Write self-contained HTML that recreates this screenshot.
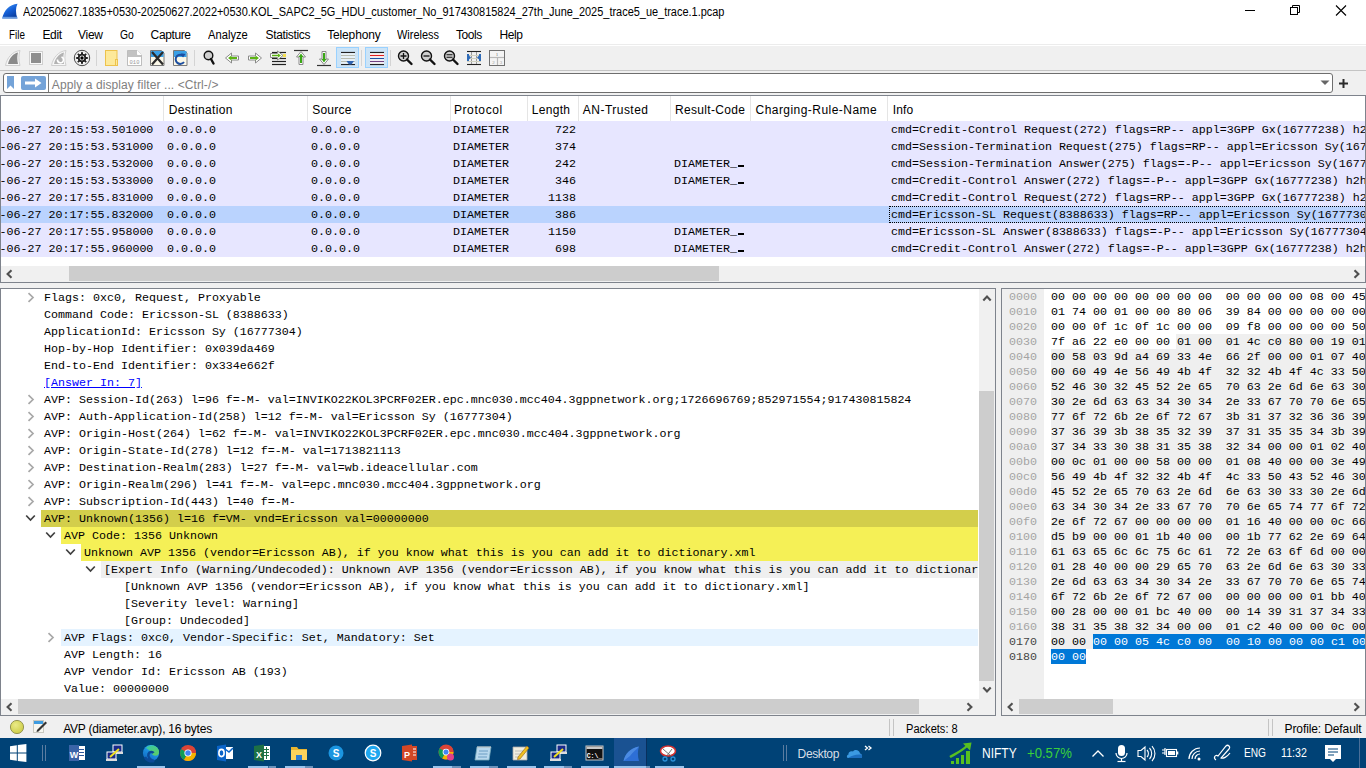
<!DOCTYPE html><html><head><meta charset="utf-8"><style>
*{margin:0;padding:0;box-sizing:border-box}
html,body{width:1366px;height:768px;overflow:hidden;background:#fff;position:relative}
body{font-family:"Liberation Sans",sans-serif;font-size:12px;color:#000}
.a{position:absolute}
.m{font-family:"Liberation Mono",monospace;font-size:11.67px;white-space:pre;line-height:17px}
.t{white-space:pre}
</style></head><body>
<svg class="a" style="left:0;top:0" width="24" height="22" viewBox="0 0 24 22"><defs><linearGradient id="sg" x1="0" y1="0" x2="0.6" y2="1"><stop offset="0" stop-color="#4fa3f7"/><stop offset="0.55" stop-color="#1560d8"/><stop offset="1" stop-color="#0a3ea0"/></linearGradient></defs><path d="M2.2 18.5 C4 10 9.5 4.5 17.5 3.8 C15.5 8 15.5 13 17.4 18.5 Z" fill="url(#sg)"/><rect x="2.2" y="16.8" width="15.2" height="1.8" fill="#7fb0ee" opacity="0.8"/></svg>
<div class="a t" style="left:23.40px;top:5px;font-size:12px;line-height:14px;transform:scaleX(0.9126);transform-origin:0 0;color:#000;">A20250627.1835+0530-20250627.2022+0530.KOL_SAPC2_5G_HDU_customer_No_917430815824_27th_June_2025_trace5_ue_trace.1.pcap</div>
<div class="a" style="left:1245px;top:10px;width:10px;height:1px;background:#000"></div>
<svg class="a" style="left:1289px;top:4px" width="12" height="12" viewBox="0 0 12 12"><rect x="1.5" y="3.5" width="7" height="7" fill="none" stroke="#000"/><path d="M3.5 3.5V1.5H10.5V8.5H8.5" fill="none" stroke="#000"/></svg>
<svg class="a" style="left:1335px;top:4px" width="12" height="12" viewBox="0 0 12 12"><path d="M1 1.5L11 11.5M11 1.5L1 11.5" stroke="#000" stroke-width="1.1"/></svg>
<div class="a t" style="left:8.90px;top:28px;font-size:12px;line-height:14px;transform:scaleX(0.8200);transform-origin:0 0;color:#000;">File</div>
<div class="a t" style="left:42.50px;top:28px;font-size:12px;line-height:14px;letter-spacing:-0.400px;color:#000;">Edit</div>
<div class="a t" style="left:78.00px;top:28px;font-size:12px;line-height:14px;letter-spacing:-0.267px;color:#000;">View</div>
<div class="a t" style="left:119.60px;top:28px;font-size:12px;line-height:14px;transform:scaleX(0.8625);transform-origin:0 0;color:#000;">Go</div>
<div class="a t" style="left:150.60px;top:28px;font-size:12px;line-height:14px;letter-spacing:-0.383px;color:#000;">Capture</div>
<div class="a t" style="left:207.90px;top:28px;font-size:12px;line-height:14px;transform:scaleX(0.9326);transform-origin:0 0;color:#000;">Analyze</div>
<div class="a t" style="left:265.50px;top:28px;font-size:12px;line-height:14px;letter-spacing:-0.344px;color:#000;">Statistics</div>
<div class="a t" style="left:327.20px;top:28px;font-size:12px;line-height:14px;letter-spacing:-0.150px;color:#000;">Telephony</div>
<div class="a t" style="left:397.40px;top:28px;font-size:12px;line-height:14px;transform:scaleX(0.9130);transform-origin:0 0;color:#000;">Wireless</div>
<div class="a t" style="left:456.00px;top:28px;font-size:12px;line-height:14px;letter-spacing:-0.425px;color:#000;">Tools</div>
<div class="a t" style="left:499.50px;top:28px;font-size:12px;line-height:14px;letter-spacing:-0.433px;color:#000;">Help</div>
<div class="a" style="left:0;top:44px;width:1366px;height:1px;background:#ececec"></div>
<div class="a" style="left:0;top:46px;width:1366px;height:49px;background:#f0f0f0"></div>
<div class="a" style="left:0;top:70px;width:1366px;height:1px;background:#c4c4c4"></div>
<svg class="a" style="left:0;top:0" width="520" height="72" viewBox="0 0 520 72"><path d="M5.5 65.5C7 58 12 51.5 20 50.5C18.5 55 18.5 60 20 65.5Z" fill="#f7f7f7" stroke="#cfcfcf"/><path d="M8 64C9.5 58 13 53.5 18 52.5C17 56 17 60 18 64Z" fill="#8a8a8a"/><rect x="29.5" y="51.5" width="13" height="13" fill="#f9f9f9" stroke="#cfcfcf"/><rect x="31" y="53" width="10" height="10" fill="#8e8e8e"/><path d="M51.5 65.5C53 58 58 51.5 66 50.5C64.5 55 64.5 60 66 65.5Z" fill="#f7f7f7" stroke="#cfcfcf"/><path d="M54 64C55.5 58 59 53.5 64 52.5C63 56 63 60 64 64Z" fill="#b2b2b2"/><path d="M57.5 59.5A3 3 0 1 0 61.5 57" fill="none" stroke="#fff" stroke-width="1.6"/><circle cx="82" cy="58" r="7.7" fill="#fff" stroke="#333" stroke-width="0.9"/><circle cx="82" cy="58" r="6.4" fill="none" stroke="#d8d8d8" stroke-width="0.8"/><rect x="81" y="52.2" width="2" height="2.4" fill="#222" transform="rotate(0 82 58)"/><rect x="81" y="52.2" width="2" height="2.4" fill="#222" transform="rotate(45 82 58)"/><rect x="81" y="52.2" width="2" height="2.4" fill="#222" transform="rotate(90 82 58)"/><rect x="81" y="52.2" width="2" height="2.4" fill="#222" transform="rotate(135 82 58)"/><rect x="81" y="52.2" width="2" height="2.4" fill="#222" transform="rotate(180 82 58)"/><rect x="81" y="52.2" width="2" height="2.4" fill="#222" transform="rotate(225 82 58)"/><rect x="81" y="52.2" width="2" height="2.4" fill="#222" transform="rotate(270 82 58)"/><rect x="81" y="52.2" width="2" height="2.4" fill="#222" transform="rotate(315 82 58)"/><circle cx="82" cy="58" r="4.3" fill="#222"/><circle cx="82" cy="58" r="2.4" fill="#fff"/><circle cx="82" cy="58" r="1.7" fill="#000"/><line x1="96.5" y1="50" x2="96.5" y2="66" stroke="#d4d4d4"/><line x1="194.5" y1="50" x2="194.5" y2="66" stroke="#d4d4d4"/><line x1="361.5" y1="50" x2="361.5" y2="66" stroke="#d4d4d4"/><line x1="390.5" y1="50" x2="390.5" y2="66" stroke="#d4d4d4"/><rect x="105.5" y="50.5" width="11.5" height="15" fill="#fde99a" stroke="#edc24c"/><rect x="115.5" y="59.5" width="2" height="6" fill="#fde99a" stroke="#edc24c"/><path d="M127.5 50.5H137.5L141.5 54.5V65.5H127.5Z" fill="#c2c2c2" stroke="#bdbdbd"/><path d="M137.5 50.5V54.5H141.5" fill="#fff" stroke="#fff"/><rect x="128" y="57" width="13" height="8" fill="#fff"/><text x="134.5" y="63.8" font-family="Liberation Mono" font-size="5.5" fill="#9a9a9a" text-anchor="middle">010</text><path d="M150.5 50.5H161.5L164 53V65.5H150.5Z" fill="#fbf8e8" stroke="#7a7a7a"/><rect x="151" y="51" width="12.5" height="6" fill="#3aa0e6"/><path d="M152 52L163 64.5M163 52L152 64.5" stroke="#2a2a2a" stroke-width="2.2"/><path d="M173.5 50.5H184.5L187 53V65.5H173.5Z" fill="#fbf8e8" stroke="#7a7a7a"/><rect x="174" y="51" width="12.5" height="6" fill="#3aa0e6"/><path d="M183.5 56A4.6 4.6 0 1 0 184 62" fill="none" stroke="#1d4ea0" stroke-width="2"/><path d="M181 53.2L185.5 54L183 57.5Z" fill="#1d4ea0"/><circle cx="208.5" cy="55.5" r="4.3" fill="#cfcfcf" stroke="#111" stroke-width="1.4"/><line x1="211" y1="59" x2="213.5" y2="63.5" stroke="#111" stroke-width="2.4" stroke-linecap="round"/><path d="M225.5 58L231.5 53V56H238.5V60H231.5V63Z" fill="#fff" stroke="#8a8a8a"/><path d="M228 58L231.5 55.5V57H237V59H231.5V60.5Z" fill="#5cb315"/><path d="M261.5 58L255.5 53V56H248.5V60H255.5V63Z" fill="#fff" stroke="#8a8a8a"/><path d="M259 58L255.5 55.5V57H250V59H255.5V60.5Z" fill="#5cb315"/><g stroke="#222" stroke-width="1.2"><line x1="272" y1="52.5" x2="286" y2="52.5"/><line x1="272" y1="58.5" x2="286" y2="58.5"/><line x1="272" y1="61.5" x2="286" y2="61.5"/><line x1="272" y1="64.5" x2="286" y2="64.5"/></g><rect x="283" y="54" width="3" height="3" fill="#f5e050"/><path d="M270.5 53.5H277.5V51L283 55.5L277.5 60V57.5H270.5Z" fill="#fff" stroke="#8a8a8a"/><path d="M272 54.8H278V53.5L281 55.5L278 57.5V56.3H272Z" fill="#5cb315"/><line x1="294" y1="50.5" x2="308" y2="50.5" stroke="#333" stroke-width="1.2"/><path d="M301 51.5L305.5 57H303V64.5H299V57H296.5Z" fill="#fff" stroke="#8a8a8a"/><path d="M301 53.5L303.5 57H302V63H300V57H298.5Z" fill="#3aa815"/><line x1="317" y1="65.5" x2="331" y2="65.5" stroke="#333" stroke-width="1.2"/><path d="M324 64.5L328.5 59H326V51.5H322V59H319.5Z" fill="#fff" stroke="#8a8a8a"/><path d="M324 62.5L326.5 59H325V53H323V59H321.5Z" fill="#3aa815"/><rect x="336.5" y="47.5" width="22" height="20" fill="#cce4f7" stroke="#99d1ff"/><g stroke-width="1.2"><line x1="341" y1="52.5" x2="355" y2="52.5" stroke="#222"/><line x1="341" y1="55.5" x2="355" y2="55.5" stroke="#b8bcb0"/><line x1="341" y1="58.5" x2="355" y2="58.5" stroke="#b8bcb0"/><line x1="341" y1="61.5" x2="355" y2="61.5" stroke="#b8bcb0"/><line x1="341" y1="64.5" x2="355" y2="64.5" stroke="#222"/></g><rect x="341" y="53" width="14" height="11" fill="#fff" opacity="0.55"/><line x1="341" y1="55.5" x2="355" y2="55.5" stroke="#b8bcb0"/><line x1="341" y1="58.5" x2="355" y2="58.5" stroke="#b8bcb0"/><line x1="341" y1="61.5" x2="355" y2="61.5" stroke="#b8bcb0"/><path d="M346.5 61H354L351.5 64.5H349Z" fill="#2f63b0"/><rect x="365.5" y="47.5" width="22" height="20" fill="#cce4f7" stroke="#99d1ff"/><rect x="370" y="52" width="14" height="13" fill="#fff"/><g stroke-width="1.2"><line x1="370" y1="52.5" x2="384" y2="52.5" stroke="#222"/><line x1="370" y1="55.5" x2="384" y2="55.5" stroke="#e02020"/><line x1="370" y1="58.5" x2="384" y2="58.5" stroke="#2050a0"/><line x1="370" y1="61.5" x2="384" y2="61.5" stroke="#704080"/><line x1="370" y1="64.5" x2="384" y2="64.5" stroke="#222"/></g><circle cx="403.5" cy="56" r="5" fill="#cfcfcf" stroke="#111" stroke-width="1.4"/><line x1="407.0" y1="59.5" x2="411.5" y2="64" stroke="#111" stroke-width="2.4" stroke-linecap="round"/><path d="M400.5 56H406.5M403.5 53V59" stroke="#111" stroke-width="1.3"/><circle cx="426.5" cy="56" r="5" fill="#cfcfcf" stroke="#111" stroke-width="1.4"/><line x1="430.0" y1="59.5" x2="434.5" y2="64" stroke="#111" stroke-width="2.4" stroke-linecap="round"/><path d="M423.5 56H429.5" stroke="#111" stroke-width="1.3"/><circle cx="449.5" cy="56" r="5" fill="#cfcfcf" stroke="#111" stroke-width="1.4"/><line x1="453.0" y1="59.5" x2="457.5" y2="64" stroke="#111" stroke-width="2.4" stroke-linecap="round"/><path d="M446.5 54.8H452.5M446.5 57.2H452.5" stroke="#111" stroke-width="1.1"/><g stroke="#222" stroke-width="1.1"><line x1="467" y1="51.5" x2="481" y2="51.5"/><line x1="467" y1="64.5" x2="481" y2="64.5"/></g><g stroke="#9a9a9a" stroke-width="1"><line x1="471.5" y1="52" x2="471.5" y2="64"/><line x1="476.5" y1="52" x2="476.5" y2="64"/><line x1="467" y1="55.5" x2="481" y2="55.5" stroke="#d0d0c0"/><line x1="467" y1="58.5" x2="481" y2="58.5" stroke="#d0d0c0"/><line x1="467" y1="61.5" x2="481" y2="61.5" stroke="#d0d0c0"/></g><path d="M467.5 54L471 57.5L467.5 61Z" fill="#2f6bb8"/><path d="M480.5 54L477 57.5L480.5 61Z" fill="#2f6bb8"/><rect x="467" y="54" width="2" height="7" fill="#2f6bb8"/><rect x="479" y="54" width="2" height="7" fill="#2f6bb8"/><rect x="489.5" y="50.5" width="15" height="15" fill="#f4f4f4" stroke="#707070"/><line x1="490" y1="57.5" x2="504" y2="57.5" stroke="#b8b8b8" stroke-width="1.2"/><line x1="497.5" y1="58" x2="497.5" y2="65" stroke="#b8b8b8" stroke-width="1.2"/><text x="497" y="56" font-family="Liberation Serif" font-size="5" fill="#777" text-anchor="middle">1</text><text x="493.5" y="63.5" font-family="Liberation Serif" font-size="5" fill="#999" text-anchor="middle">2</text><text x="501" y="63.5" font-family="Liberation Serif" font-size="5" fill="#999" text-anchor="middle">3</text></svg>
<div class="a" style="left:3px;top:73px;width:1330px;height:20px;background:#fff;border:1px solid #6e6e6e;border-radius:3px"></div>
<svg class="a" style="left:0;top:70px" width="60" height="25" viewBox="0 70 60 25"><path d="M7 76H14V89L10.5 85.5L7 89Z" fill="#74a3d8"/><rect x="21" y="76" width="25" height="14" rx="2" fill="#74a3d8"/><path d="M25 81.5H35V78.5L41.5 83L35 87.5V84.5H25Z" fill="#fff"/><line x1="48.5" y1="74" x2="48.5" y2="92" stroke="#7a7a7a"/></svg>
<div class="a t" style="left:51.80px;top:78px;font-size:12px;line-height:14px;letter-spacing:0.094px;color:#808080;">Apply a display filter ... &lt;Ctrl-/&gt;</div>
<svg class="a" style="left:1320px;top:80px" width="10" height="6" viewBox="0 0 10 6"><path d="M0.5 0.5H9.5L5 5Z" fill="#666"/></svg>
<svg class="a" style="left:1338px;top:78px" width="11" height="11" viewBox="0 0 11 11"><path d="M5.5 1V10M1 5.5H10" stroke="#2a2a2a" stroke-width="2"/></svg>
<div class="a" style="left:0;top:95px;width:1366px;height:188px;background:#fff;border:1px solid #7e838c"></div>
<div class="a" style="left:163px;top:96px;width:1px;height:25px;background:#e5e5e5"></div>
<div class="a t" style="left:168.80px;top:103px;font-size:12px;line-height:14px;letter-spacing:0.360px;color:#000;">Destination</div>
<div class="a" style="left:307px;top:96px;width:1px;height:25px;background:#e5e5e5"></div>
<div class="a t" style="left:312.20px;top:103px;font-size:12px;line-height:14px;letter-spacing:0.220px;color:#000;">Source</div>
<div class="a" style="left:450px;top:96px;width:1px;height:25px;background:#e5e5e5"></div>
<div class="a t" style="left:453.90px;top:103px;font-size:12px;line-height:14px;letter-spacing:0.614px;color:#000;">Protocol</div>
<div class="a" style="left:527px;top:96px;width:1px;height:25px;background:#e5e5e5"></div>
<div class="a t" style="left:531.70px;top:103px;font-size:12px;line-height:14px;letter-spacing:0.320px;color:#000;">Length</div>
<div class="a" style="left:578px;top:96px;width:1px;height:25px;background:#e5e5e5"></div>
<div class="a t" style="left:582.80px;top:103px;font-size:12px;line-height:14px;letter-spacing:0.478px;color:#000;">AN-Trusted</div>
<div class="a" style="left:670px;top:96px;width:1px;height:25px;background:#e5e5e5"></div>
<div class="a t" style="left:674.90px;top:103px;font-size:12px;line-height:14px;letter-spacing:0.340px;color:#000;">Result-Code</div>
<div class="a" style="left:750px;top:96px;width:1px;height:25px;background:#e5e5e5"></div>
<div class="a t" style="left:755.50px;top:103px;font-size:12px;line-height:14px;letter-spacing:0.459px;color:#000;">Charging-Rule-Name</div>
<div class="a" style="left:887px;top:96px;width:1px;height:25px;background:#e5e5e5"></div>
<div class="a t" style="left:892.70px;top:103px;font-size:12px;line-height:14px;letter-spacing:0.167px;color:#000;">Info</div>
<div class="a" style="left:1px;top:121px;width:1364px;height:136px;overflow:hidden">
<div class="a" style="left:0;top:0px;width:1364px;height:17px;background:#e7e6ff"></div>
<div class="a m" style="left:-29.5px;top:1px">2025-06-27 20:15:53.501000</div>
<div class="a m" style="left:166px;top:1px">0.0.0.0</div>
<div class="a m" style="left:310px;top:1px">0.0.0.0</div>
<div class="a m" style="left:452px;top:1px">DIAMETER</div>
<div class="a m" style="left:554px;top:1px">722</div>
<div class="a m" style="left:890px;top:1px">cmd=Credit-Control Request(272) flags=RP-- appl=3GPP Gx(16777238) h2h=39da468 e2e=334e662e</div>
<div class="a" style="left:0;top:17px;width:1364px;height:17px;background:#e7e6ff"></div>
<div class="a m" style="left:-29.5px;top:18px">2025-06-27 20:15:53.531000</div>
<div class="a m" style="left:166px;top:18px">0.0.0.0</div>
<div class="a m" style="left:310px;top:18px">0.0.0.0</div>
<div class="a m" style="left:452px;top:18px">DIAMETER</div>
<div class="a m" style="left:554px;top:18px">374</div>
<div class="a m" style="left:890px;top:18px">cmd=Session-Termination Request(275) flags=RP-- appl=Ericsson Sy(16777304) h2h=39da469</div>
<div class="a" style="left:0;top:34px;width:1364px;height:17px;background:#e7e6ff"></div>
<div class="a m" style="left:-29.5px;top:35px">2025-06-27 20:15:53.532000</div>
<div class="a m" style="left:166px;top:35px">0.0.0.0</div>
<div class="a m" style="left:310px;top:35px">0.0.0.0</div>
<div class="a m" style="left:452px;top:35px">DIAMETER</div>
<div class="a m" style="left:554px;top:35px">242</div>
<div class="a m" style="left:673px;top:35px">DIAMETER_</div>
<div class="a" style="left:737px;top:43.5px;width:6px;height:2.5px;background:#000"></div>
<div class="a m" style="left:890px;top:35px">cmd=Session-Termination Answer(275) flags=-P-- appl=Ericsson Sy(16777304) h2h=39da469</div>
<div class="a" style="left:0;top:51px;width:1364px;height:17px;background:#e7e6ff"></div>
<div class="a m" style="left:-29.5px;top:52px">2025-06-27 20:15:53.533000</div>
<div class="a m" style="left:166px;top:52px">0.0.0.0</div>
<div class="a m" style="left:310px;top:52px">0.0.0.0</div>
<div class="a m" style="left:452px;top:52px">DIAMETER</div>
<div class="a m" style="left:554px;top:52px">346</div>
<div class="a m" style="left:673px;top:52px">DIAMETER_</div>
<div class="a" style="left:737px;top:60.5px;width:6px;height:2.5px;background:#000"></div>
<div class="a m" style="left:890px;top:52px">cmd=Credit-Control Answer(272) flags=-P-- appl=3GPP Gx(16777238) h2h=39da468 e2e=334e662e</div>
<div class="a" style="left:0;top:68px;width:1364px;height:17px;background:#e7e6ff"></div>
<div class="a m" style="left:-29.5px;top:69px">2025-06-27 20:17:55.831000</div>
<div class="a m" style="left:166px;top:69px">0.0.0.0</div>
<div class="a m" style="left:310px;top:69px">0.0.0.0</div>
<div class="a m" style="left:452px;top:69px">DIAMETER</div>
<div class="a m" style="left:547px;top:69px">1138</div>
<div class="a m" style="left:890px;top:69px">cmd=Credit-Control Request(272) flags=RP-- appl=3GPP Gx(16777238) h2h=39da46a</div>
<div class="a" style="left:0;top:85px;width:1364px;height:17px;background:#bad3fe"></div>
<div class="a m" style="left:-29.5px;top:86px">2025-06-27 20:17:55.832000</div>
<div class="a m" style="left:166px;top:86px">0.0.0.0</div>
<div class="a m" style="left:310px;top:86px">0.0.0.0</div>
<div class="a m" style="left:452px;top:86px">DIAMETER</div>
<div class="a m" style="left:554px;top:86px">386</div>
<div class="a m" style="left:890px;top:86px">cmd=Ericsson-SL Request(8388633) flags=RP-- appl=Ericsson Sy(16777304) h2h=39da469</div>
<div class="a" style="left:888px;top:85px;width:490px;height:17px;border:1px dotted #000;border-right:none"></div>
<div class="a" style="left:0;top:102px;width:1364px;height:17px;background:#e7e6ff"></div>
<div class="a m" style="left:-29.5px;top:103px">2025-06-27 20:17:55.958000</div>
<div class="a m" style="left:166px;top:103px">0.0.0.0</div>
<div class="a m" style="left:310px;top:103px">0.0.0.0</div>
<div class="a m" style="left:452px;top:103px">DIAMETER</div>
<div class="a m" style="left:547px;top:103px">1150</div>
<div class="a m" style="left:673px;top:103px">DIAMETER_</div>
<div class="a" style="left:737px;top:111.5px;width:6px;height:2.5px;background:#000"></div>
<div class="a m" style="left:890px;top:103px">cmd=Ericsson-SL Answer(8388633) flags=-P-- appl=Ericsson Sy(16777304) h2h=39da469</div>
<div class="a" style="left:0;top:119px;width:1364px;height:17px;background:#e7e6ff"></div>
<div class="a m" style="left:-29.5px;top:120px">2025-06-27 20:17:55.960000</div>
<div class="a m" style="left:166px;top:120px">0.0.0.0</div>
<div class="a m" style="left:310px;top:120px">0.0.0.0</div>
<div class="a m" style="left:452px;top:120px">DIAMETER</div>
<div class="a m" style="left:554px;top:120px">698</div>
<div class="a m" style="left:673px;top:120px">DIAMETER_</div>
<div class="a" style="left:737px;top:128.5px;width:6px;height:2.5px;background:#000"></div>
<div class="a m" style="left:890px;top:120px">cmd=Credit-Control Answer(272) flags=-P-- appl=3GPP Gx(16777238) h2h=39da46a</div>
</div>
<div class="a" style="left:1px;top:266px;width:1364px;height:16px;background:#f0f0f0"></div>
<div class="a" style="left:69px;top:266px;width:650px;height:15px;background:#cdcdcd"></div>
<svg class="a" style="left:5px;top:269px" width="9" height="10" viewBox="0 0 9 10"><path d="M6.5 1.3L2.6 5L6.5 8.7" fill="none" stroke="#505050" stroke-width="2.1"/></svg>
<svg class="a" style="left:1353px;top:269px" width="9" height="10" viewBox="0 0 9 10"><path d="M1.5 1.3L5.4 5L1.5 8.7" fill="none" stroke="#505050" stroke-width="2.1"/></svg>
<div class="a" style="left:0;top:283px;width:1366px;height:5px;background:#f0f0f0"></div>
<div class="a" style="left:0;top:288px;width:996px;height:428px;background:#fff;border:1px solid #7e838c"></div>
<div class="a" style="left:996px;top:288px;width:5px;height:428px;background:#f0f0f0"></div>
<div class="a" style="left:1px;top:289px;width:977px;height:410px;overflow:hidden">
<svg class="a" style="left:26px;top:3px" width="8" height="11" viewBox="0 0 8 11"><path d="M1.5 1.2L6 5.5L1.5 9.8" fill="none" stroke="#a8a8a8" stroke-width="1.7"/></svg>
<div class="a m" style="left:43px;top:1px">Flags: 0xc0, Request, Proxyable</div>
<div class="a m" style="left:43px;top:18px">Command Code: Ericsson-SL (8388633)</div>
<div class="a m" style="left:43px;top:35px">ApplicationId: Ericsson Sy (16777304)</div>
<div class="a m" style="left:43px;top:52px">Hop-by-Hop Identifier: 0x039da469</div>
<div class="a m" style="left:43px;top:69px">End-to-End Identifier: 0x334e662f</div>
<div class="a m" style="left:43px;top:86px;color:#0000ff;text-decoration:underline">[Answer In: 7]</div>
<svg class="a" style="left:26px;top:105px" width="8" height="11" viewBox="0 0 8 11"><path d="M1.5 1.2L6 5.5L1.5 9.8" fill="none" stroke="#a8a8a8" stroke-width="1.7"/></svg>
<div class="a m" style="left:43px;top:103px">AVP: Session-Id(263) l=96 f=-M- val=INVIKO22KOL3PCRF02ER.epc.mnc030.mcc404.3gppnetwork.org;1726696769;852971554;917430815824</div>
<svg class="a" style="left:26px;top:122px" width="8" height="11" viewBox="0 0 8 11"><path d="M1.5 1.2L6 5.5L1.5 9.8" fill="none" stroke="#a8a8a8" stroke-width="1.7"/></svg>
<div class="a m" style="left:43px;top:120px">AVP: Auth-Application-Id(258) l=12 f=-M- val=Ericsson Sy (16777304)</div>
<svg class="a" style="left:26px;top:139px" width="8" height="11" viewBox="0 0 8 11"><path d="M1.5 1.2L6 5.5L1.5 9.8" fill="none" stroke="#a8a8a8" stroke-width="1.7"/></svg>
<div class="a m" style="left:43px;top:137px">AVP: Origin-Host(264) l=62 f=-M- val=INVIKO22KOL3PCRF02ER.epc.mnc030.mcc404.3gppnetwork.org</div>
<svg class="a" style="left:26px;top:156px" width="8" height="11" viewBox="0 0 8 11"><path d="M1.5 1.2L6 5.5L1.5 9.8" fill="none" stroke="#a8a8a8" stroke-width="1.7"/></svg>
<div class="a m" style="left:43px;top:154px">AVP: Origin-State-Id(278) l=12 f=-M- val=1713821113</div>
<svg class="a" style="left:26px;top:173px" width="8" height="11" viewBox="0 0 8 11"><path d="M1.5 1.2L6 5.5L1.5 9.8" fill="none" stroke="#a8a8a8" stroke-width="1.7"/></svg>
<div class="a m" style="left:43px;top:171px">AVP: Destination-Realm(283) l=27 f=-M- val=wb.ideacellular.com</div>
<svg class="a" style="left:26px;top:190px" width="8" height="11" viewBox="0 0 8 11"><path d="M1.5 1.2L6 5.5L1.5 9.8" fill="none" stroke="#a8a8a8" stroke-width="1.7"/></svg>
<div class="a m" style="left:43px;top:188px">AVP: Origin-Realm(296) l=41 f=-M- val=epc.mnc030.mcc404.3gppnetwork.org</div>
<svg class="a" style="left:26px;top:207px" width="8" height="11" viewBox="0 0 8 11"><path d="M1.5 1.2L6 5.5L1.5 9.8" fill="none" stroke="#a8a8a8" stroke-width="1.7"/></svg>
<div class="a m" style="left:43px;top:205px">AVP: Subscription-Id(443) l=40 f=-M-</div>
<div class="a" style="left:40px;top:221px;width:938px;height:17px;background:#d3ce4b"></div>
<svg class="a" style="left:24px;top:225px" width="11" height="8" viewBox="0 0 11 8"><path d="M1.2 1.5L5.5 6L9.8 1.5" fill="none" stroke="#404040" stroke-width="1.7"/></svg>
<div class="a m" style="left:43px;top:222px">AVP: Unknown(1356) l=16 f=VM- vnd=Ericsson val=00000000</div>
<div class="a" style="left:60px;top:238px;width:918px;height:17px;background:#f5f056"></div>
<svg class="a" style="left:44px;top:242px" width="11" height="8" viewBox="0 0 11 8"><path d="M1.2 1.5L5.5 6L9.8 1.5" fill="none" stroke="#404040" stroke-width="1.7"/></svg>
<div class="a m" style="left:63px;top:239px">AVP Code: 1356 Unknown</div>
<div class="a" style="left:80px;top:255px;width:898px;height:17px;background:#f5f056"></div>
<svg class="a" style="left:64px;top:259px" width="11" height="8" viewBox="0 0 11 8"><path d="M1.2 1.5L5.5 6L9.8 1.5" fill="none" stroke="#404040" stroke-width="1.7"/></svg>
<div class="a m" style="left:83px;top:256px">Unknown AVP 1356 (vendor=Ericsson AB), if you know what this is you can add it to dictionary.xml</div>
<div class="a" style="left:100px;top:272px;width:878px;height:17px;background:#efefef"></div>
<svg class="a" style="left:84px;top:276px" width="11" height="8" viewBox="0 0 11 8"><path d="M1.2 1.5L5.5 6L9.8 1.5" fill="none" stroke="#404040" stroke-width="1.7"/></svg>
<div class="a m" style="left:103px;top:273px">[Expert Info (Warning/Undecoded): Unknown AVP 1356 (vendor=Ericsson AB), if you know what this is you can add it to dictionary.xml]</div>
<div class="a m" style="left:123px;top:290px">[Unknown AVP 1356 (vendor=Ericsson AB), if you know what this is you can add it to dictionary.xml]</div>
<div class="a m" style="left:123px;top:307px">[Severity level: Warning]</div>
<div class="a m" style="left:123px;top:324px">[Group: Undecoded]</div>
<div class="a" style="left:60px;top:340px;width:918px;height:17px;background:#e5f3ff"></div>
<svg class="a" style="left:46px;top:343px" width="8" height="11" viewBox="0 0 8 11"><path d="M1.5 1.2L6 5.5L1.5 9.8" fill="none" stroke="#a8a8a8" stroke-width="1.7"/></svg>
<div class="a m" style="left:63px;top:341px">AVP Flags: 0xc0, Vendor-Specific: Set, Mandatory: Set</div>
<div class="a m" style="left:63px;top:358px">AVP Length: 16</div>
<div class="a m" style="left:63px;top:375px">AVP Vendor Id: Ericsson AB (193)</div>
<div class="a m" style="left:63px;top:392px">Value: 00000000</div>
</div>
<div class="a" style="left:979px;top:289px;width:16px;height:410px;background:#f0f0f0"></div>
<div class="a" style="left:979px;top:391px;width:15px;height:290px;background:#cdcdcd"></div>
<div class="a" style="left:1px;top:699px;width:994px;height:16px;background:#f0f0f0"></div>
<div class="a" style="left:18px;top:699px;width:901px;height:15px;background:#cdcdcd"></div>
<svg class="a" style="left:982px;top:294px" width="10" height="9" viewBox="0 0 10 9"><path d="M1.3 6.5L5 2.6L8.7 6.5" fill="none" stroke="#505050" stroke-width="2.1"/></svg>
<svg class="a" style="left:982px;top:686px" width="10" height="9" viewBox="0 0 10 9"><path d="M1.3 1.5L5 5.4L8.7 1.5" fill="none" stroke="#505050" stroke-width="2.1"/></svg>
<svg class="a" style="left:5px;top:702px" width="9" height="10" viewBox="0 0 9 10"><path d="M6.5 1.3L2.6 5L6.5 8.7" fill="none" stroke="#505050" stroke-width="2.1"/></svg>
<svg class="a" style="left:966px;top:702px" width="9" height="10" viewBox="0 0 9 10"><path d="M1.5 1.3L5.4 5L1.5 8.7" fill="none" stroke="#505050" stroke-width="2.1"/></svg>
<div class="a" style="left:1001px;top:288px;width:365px;height:428px;background:#fff;border:1px solid #7e838c"></div>
<div class="a" style="left:1002px;top:289px;width:363px;height:410px;overflow:hidden">
<div class="a" style="left:0;top:0;width:42px;height:410px;background:#efefef"></div>
<div class="a" style="left:174px;top:45px;width:200px;height:15px;background:#efefef"></div>
<div class="a" style="left:49px;top:60px;width:330px;height:285px;background:#efefef"></div>
<div class="a" style="left:49px;top:345px;width:42px;height:15px;background:#efefef"></div>
<div class="a" style="left:91px;top:345px;width:290px;height:15px;background:#0078d7"></div>
<div class="a" style="left:49px;top:360px;width:35px;height:15px;background:#0078d7"></div>
<div class="a m" style="left:7px;top:1px;line-height:15px;color:#a4a4a4">0000</div>
<div class="a m" style="left:49px;top:1px;line-height:15px">00 00 00 00 00 00 00 00  00 00 00 00 08 00 45 00</div>
<div class="a m" style="left:7px;top:16px;line-height:15px;color:#a4a4a4">0010</div>
<div class="a m" style="left:49px;top:16px;line-height:15px">01 74 00 01 00 00 80 06  39 84 00 00 00 00 00 00</div>
<div class="a m" style="left:7px;top:31px;line-height:15px;color:#a4a4a4">0020</div>
<div class="a m" style="left:49px;top:31px;line-height:15px">00 00 0f 1c 0f 1c 00 00  09 f8 00 00 00 00 50 18</div>
<div class="a m" style="left:7px;top:46px;line-height:15px;color:#a4a4a4">0030</div>
<div class="a m" style="left:49px;top:46px;line-height:15px">7f a6 22 e0 00 00 01 00  01 4c c0 80 00 19 01 00</div>
<div class="a m" style="left:7px;top:61px;line-height:15px;color:#a4a4a4">0040</div>
<div class="a m" style="left:49px;top:61px;line-height:15px">00 58 03 9d a4 69 33 4e  66 2f 00 00 01 07 40 00</div>
<div class="a m" style="left:7px;top:76px;line-height:15px;color:#a4a4a4">0050</div>
<div class="a m" style="left:49px;top:76px;line-height:15px">00 60 49 4e 56 49 4b 4f  32 32 4b 4f 4c 33 50 43</div>
<div class="a m" style="left:7px;top:91px;line-height:15px;color:#a4a4a4">0060</div>
<div class="a m" style="left:49px;top:91px;line-height:15px">52 46 30 32 45 52 2e 65  70 63 2e 6d 6e 63 30 33</div>
<div class="a m" style="left:7px;top:106px;line-height:15px;color:#a4a4a4">0070</div>
<div class="a m" style="left:49px;top:106px;line-height:15px">30 2e 6d 63 63 34 30 34  2e 33 67 70 70 6e 65 74</div>
<div class="a m" style="left:7px;top:121px;line-height:15px;color:#a4a4a4">0080</div>
<div class="a m" style="left:49px;top:121px;line-height:15px">77 6f 72 6b 2e 6f 72 67  3b 31 37 32 36 36 39 36</div>
<div class="a m" style="left:7px;top:136px;line-height:15px;color:#a4a4a4">0090</div>
<div class="a m" style="left:49px;top:136px;line-height:15px">37 36 39 3b 38 35 32 39  37 31 35 35 34 3b 39 31</div>
<div class="a m" style="left:7px;top:151px;line-height:15px;color:#a4a4a4">00a0</div>
<div class="a m" style="left:49px;top:151px;line-height:15px">37 34 33 30 38 31 35 38  32 34 00 00 01 02 40 00</div>
<div class="a m" style="left:7px;top:166px;line-height:15px;color:#a4a4a4">00b0</div>
<div class="a m" style="left:49px;top:166px;line-height:15px">00 0c 01 00 00 58 00 00  01 08 40 00 00 3e 49 4e</div>
<div class="a m" style="left:7px;top:181px;line-height:15px;color:#a4a4a4">00c0</div>
<div class="a m" style="left:49px;top:181px;line-height:15px">56 49 4b 4f 32 32 4b 4f  4c 33 50 43 52 46 30 32</div>
<div class="a m" style="left:7px;top:196px;line-height:15px;color:#a4a4a4">00d0</div>
<div class="a m" style="left:49px;top:196px;line-height:15px">45 52 2e 65 70 63 2e 6d  6e 63 30 33 30 2e 6d 63</div>
<div class="a m" style="left:7px;top:211px;line-height:15px;color:#a4a4a4">00e0</div>
<div class="a m" style="left:49px;top:211px;line-height:15px">63 34 30 34 2e 33 67 70  70 6e 65 74 77 6f 72 6b</div>
<div class="a m" style="left:7px;top:226px;line-height:15px;color:#a4a4a4">00f0</div>
<div class="a m" style="left:49px;top:226px;line-height:15px">2e 6f 72 67 00 00 00 00  01 16 40 00 00 0c 66 27</div>
<div class="a m" style="left:7px;top:241px;line-height:15px;color:#a4a4a4">0100</div>
<div class="a m" style="left:49px;top:241px;line-height:15px">d5 b9 00 00 01 1b 40 00  00 1b 77 62 2e 69 64 65</div>
<div class="a m" style="left:7px;top:256px;line-height:15px;color:#a4a4a4">0110</div>
<div class="a m" style="left:49px;top:256px;line-height:15px">61 63 65 6c 6c 75 6c 61  72 2e 63 6f 6d 00 00 00</div>
<div class="a m" style="left:7px;top:271px;line-height:15px;color:#a4a4a4">0120</div>
<div class="a m" style="left:49px;top:271px;line-height:15px">01 28 40 00 00 29 65 70  63 2e 6d 6e 63 30 33 30</div>
<div class="a m" style="left:7px;top:286px;line-height:15px;color:#a4a4a4">0130</div>
<div class="a m" style="left:49px;top:286px;line-height:15px">2e 6d 63 63 34 30 34 2e  33 67 70 70 6e 65 74 77</div>
<div class="a m" style="left:7px;top:301px;line-height:15px;color:#a4a4a4">0140</div>
<div class="a m" style="left:49px;top:301px;line-height:15px">6f 72 6b 2e 6f 72 67 00  00 00 00 00 01 bb 40 00</div>
<div class="a m" style="left:7px;top:316px;line-height:15px;color:#a4a4a4">0150</div>
<div class="a m" style="left:49px;top:316px;line-height:15px">00 28 00 00 01 bc 40 00  00 14 39 31 37 34 33 30</div>
<div class="a m" style="left:7px;top:331px;line-height:15px;color:#a4a4a4">0160</div>
<div class="a m" style="left:49px;top:331px;line-height:15px">38 31 35 38 32 34 00 00  01 c2 40 00 00 0c 00 00</div>
<div class="a m" style="left:7px;top:346px;line-height:15px;color:#444">0170</div>
<div class="a m" style="left:49px;top:346px;line-height:15px">00 00 <span style="color:#fff">00</span> <span style="color:#fff">00</span> <span style="color:#fff">05</span> <span style="color:#fff">4c</span> <span style="color:#fff">c0</span> <span style="color:#fff">00</span>  <span style="color:#fff">00</span> <span style="color:#fff">10</span> <span style="color:#fff">00</span> <span style="color:#fff">00</span> <span style="color:#fff">00</span> <span style="color:#fff">c1</span> <span style="color:#fff">00</span> <span style="color:#fff">00</span></div>
<div class="a m" style="left:7px;top:361px;line-height:15px;color:#444">0180</div>
<div class="a m" style="left:49px;top:361px;line-height:15px"><span style="color:#fff">00</span> <span style="color:#fff">00</span></div>
</div>
<div class="a" style="left:1002px;top:699px;width:363px;height:16px;background:#f0f0f0"></div>
<div class="a" style="left:1019px;top:699px;width:94px;height:15px;background:#cdcdcd"></div>
<svg class="a" style="left:1006px;top:702px" width="9" height="10" viewBox="0 0 9 10"><path d="M6.5 1.3L2.6 5L6.5 8.7" fill="none" stroke="#505050" stroke-width="2.1"/></svg>
<svg class="a" style="left:1353px;top:702px" width="9" height="10" viewBox="0 0 9 10"><path d="M1.5 1.3L5.4 5L1.5 8.7" fill="none" stroke="#505050" stroke-width="2.1"/></svg>
<div class="a" style="left:0;top:716px;width:1366px;height:22px;background:#f0f0f0"></div>
<svg class="a" style="left:0;top:716px" width="60" height="22" viewBox="0 716 60 22"><defs><radialGradient id="yb" cx="0.4" cy="0.35" r="0.7"><stop offset="0" stop-color="#eaea88"/><stop offset="1" stop-color="#cccc44"/></radialGradient></defs><circle cx="17" cy="727" r="6.6" fill="url(#yb)" stroke="#8c8c4a" stroke-width="0.9"/><rect x="33.5" y="720.5" width="10" height="12" fill="#f6f6f0" stroke="#c8c8c0"/><rect x="34" y="721" width="9" height="3" fill="#3d9be0"/><path d="M37 730L45.5 721.5L47 723L38.5 731.5L36.5 732Z" fill="#333"/></svg>
<div class="a t" style="left:63.20px;top:722px;font-size:12px;line-height:14px;letter-spacing:-0.222px;color:#000;">AVP (diameter.avp), 16 bytes</div>
<div class="a" style="left:889px;top:719px;width:1px;height:17px;background:#c4c4c4"></div><div class="a" style="left:893px;top:719px;width:1px;height:17px;background:#c4c4c4"></div>
<div class="a t" style="left:905.60px;top:722px;font-size:12px;line-height:14px;transform:scaleX(0.9232);transform-origin:0 0;color:#000;">Packets: 8</div>
<div class="a" style="left:1268px;top:719px;width:1px;height:17px;background:#c4c4c4"></div><div class="a" style="left:1272px;top:719px;width:1px;height:17px;background:#c4c4c4"></div>
<div class="a t" style="left:1284.60px;top:722px;font-size:12px;line-height:14px;letter-spacing:-0.113px;color:#000;">Profile: Default</div>
<div class="a" style="left:0;top:738px;width:1366px;height:30px;background:#004276"></div>
<svg class="a" style="left:0;top:0" width="1366" height="768" viewBox="0 0 1366 768"><path d="M10 746.2L16.8 745.3V752.5H10Z M17.8 745.1L26.4 744V752.5H17.8Z M10 753.5H16.8V760.7L10 759.8Z M17.8 753.5H26.4V762L17.8 760.9Z" fill="#fff"/><line x1="42.5" y1="745" x2="42.5" y2="761" stroke="#5a7ca0"/><line x1="45.5" y1="745" x2="45.5" y2="761" stroke="#5a7ca0"/><rect x="75" y="746" width="10" height="14" fill="#fff"/><g stroke="#2b579a" stroke-width="1"><line x1="78" y1="749.5" x2="84" y2="749.5"/><line x1="78" y1="752.5" x2="84" y2="752.5"/><line x1="78" y1="755.5" x2="84" y2="755.5"/></g><rect x="69" y="745" width="10" height="16" fill="#3a64a8"/><text x="74" y="757.5" font-family="Liberation Sans" font-weight="bold" font-size="9" fill="#fff" text-anchor="middle">W</text><rect x="113" y="745" width="9" height="7" fill="#1a2a8a" stroke="#fff" stroke-width="1"/><rect x="112" y="752" width="11" height="2" fill="#ddd"/><rect x="107" y="752" width="9" height="7" fill="#1a2a8a" stroke="#fff" stroke-width="1"/><rect x="106" y="759" width="11" height="2" fill="#ddd"/><path d="M110 757L119 749" stroke="#f0e020" stroke-width="2"/><defs><linearGradient id="eg" x1="0" y1="1" x2="0.6" y2="0"><stop offset="0" stop-color="#0d5fb8"/><stop offset="0.6" stop-color="#1c8ee0"/><stop offset="1" stop-color="#3cc8e8"/></linearGradient><linearGradient id="eg2" x1="0" y1="0" x2="1" y2="1"><stop offset="0" stop-color="#36c8a8"/><stop offset="1" stop-color="#60d060"/></linearGradient></defs><circle cx="151" cy="753" r="8.1" fill="url(#eg)"/><path d="M146 748C149 744.5 156 744.5 158.5 749.5C159.5 752 159 755 156.5 755.5C154 756 152 755 151.5 753C151 750.5 148 749.5 146 748Z" fill="url(#eg2)"/><path d="M145 757C146 760 150 762 154 761C150 760 147.5 757 148.5 754C149.5 751.5 152.5 751.5 153.5 753" stroke="#0b4a98" stroke-width="2.6" fill="none"/><circle cx="188" cy="753" r="8" fill="#db4437"/><path d="M188 753L181.072 749.0A8 8 0 0 0 184.0 759.928Z" fill="#0f9d58"/><path d="M188 753L184.0 759.928A8 8 0 0 0 196 753Z" fill="#f4b400"/><path d="M188 753L196 753A8 8 0 0 0 192.0 746.072Z" fill="#db4437"/><circle cx="188" cy="753" r="3.6" fill="#fff"/><circle cx="188" cy="753" r="2.72" fill="#4285f4"/><rect x="224" y="747" width="9" height="12" fill="#fff"/><path d="M225 749L229 752L233 748" stroke="#0a64c8" stroke-width="1.5" fill="none"/><path d="M217 746L226 744.5V761.5L217 760Z" fill="#0a64c8"/><ellipse cx="221.5" cy="753" rx="2.6" ry="3.6" fill="none" stroke="#fff" stroke-width="1.6"/><rect x="261" y="746" width="9" height="14" fill="#fff"/><g stroke="#1e7145" stroke-width="1"><line x1="264" y1="749.5" x2="269" y2="749.5"/><line x1="264" y1="752.5" x2="269" y2="752.5"/><line x1="264" y1="755.5" x2="269" y2="755.5"/><line x1="266.5" y1="747" x2="266.5" y2="759"/></g><path d="M254 746L264 744.5V761.5L254 760Z" fill="#1e7145"/><text x="259" y="757.5" font-family="Liberation Sans" font-weight="bold" font-size="9" fill="#fff" text-anchor="middle">X</text><path d="M291 747H297L298.5 749H307V760H291Z" fill="#e8b530"/><rect x="291" y="750" width="16" height="10" fill="#fcd35c"/><rect x="296" y="755" width="6" height="5" fill="#2a7bd4"/><circle cx="336" cy="753" r="7.5" fill="#1b95e0"/><text x="336" y="757.2" font-family="Liberation Sans" font-weight="bold" font-size="10" fill="#fff" text-anchor="middle">S</text><circle cx="373" cy="753" r="7.8" fill="#1fa8f0" stroke="#fff" stroke-width="1.2"/><circle cx="373" cy="753" r="5.5" fill="#1fa8f0"/><text x="373" y="757.2" font-family="Liberation Sans" font-weight="bold" font-size="10" fill="#fff" text-anchor="middle">S</text><rect x="407" y="746" width="9" height="14" fill="#fff"/><path d="M402 746L412 744.5V761.5L402 760Z" fill="#d24726"/><rect x="411" y="746" width="6" height="14" fill="#d24726"/><text x="407" y="757.5" font-family="Liberation Sans" font-weight="bold" font-size="9" fill="#fff" text-anchor="middle">P</text><path d="M413 749H416M413 752H416M413 755H416" stroke="#fff"/><circle cx="446" cy="752" r="7.5" fill="#db4437"/><path d="M446 752L439.505 748.25A7.5 7.5 0 0 0 442.25 758.495Z" fill="#0f9d58"/><path d="M446 752L442.25 758.495A7.5 7.5 0 0 0 453.5 752Z" fill="#f4b400"/><path d="M446 752L453.5 752A7.5 7.5 0 0 0 449.75 745.505Z" fill="#db4437"/><circle cx="446" cy="752" r="3.375" fill="#fff"/><circle cx="446" cy="752" r="2.5500000000000003" fill="#4285f4"/><circle cx="450.5" cy="757" r="3.5" fill="#e0408a"/><path d="M477 747H491L489 760H475Z" fill="#b8d8ee" stroke="#7ab" stroke-width="0.8"/><g stroke="#5890b8" stroke-width="0.8"><line x1="479" y1="751" x2="488" y2="751"/><line x1="478.5" y1="754" x2="487.5" y2="754"/><line x1="478" y1="757" x2="487" y2="757"/></g><path d="M478 746V748M480 746V748M482 746V748M484 746V748M486 746V748M488 746V748M490 746V748" stroke="#ccc"/><path d="M513 747H527V760H513Z" fill="#f0eee0" stroke="#aaa" stroke-width="0.8"/><g stroke="#b0b0b0" stroke-width="0.8"><line x1="515" y1="751" x2="524" y2="751"/><line x1="515" y1="754" x2="522" y2="754"/><line x1="515" y1="757" x2="520" y2="757"/></g><path d="M518 757L527 746L529 748L520 759L517.5 759.5Z" fill="#f0c020" stroke="#906010" stroke-width="0.6"/><rect x="557" y="745" width="9" height="7" fill="#1a2a8a" stroke="#fff" stroke-width="1"/><rect x="556" y="752" width="11" height="2" fill="#ddd"/><rect x="551" y="752" width="9" height="7" fill="#1a2a8a" stroke="#fff" stroke-width="1"/><rect x="550" y="759" width="11" height="2" fill="#ddd"/><path d="M554 757L563 749" stroke="#f0e020" stroke-width="2"/><rect x="586" y="746" width="17" height="14" fill="#111" stroke="#c8c8c8" stroke-width="1"/><rect x="586.5" y="746.5" width="16" height="2.5" fill="#c8c8c8"/><text x="594.5" y="757.5" font-family="Liberation Mono" font-weight="bold" font-size="6.5" fill="#fff" text-anchor="middle">C:\_</text><rect x="614" y="738" width="32" height="30" fill="#1a5292"/><path d="M623.5 761C625 754 630 748 639 746.5C637.5 751 637.5 756 639 761Z" fill="#2d6fd6"/><path d="M623.5 761C625 754 630 748 639 746.5C636 750 633 752 630 756Z" fill="#6aa8f0" opacity="0.5"/><line x1="646.5" y1="738" x2="646.5" y2="768" stroke="#08305e"/><ellipse cx="668" cy="751" rx="7.5" ry="5" fill="#fff" stroke="#d03030" stroke-width="1.6"/><path d="M663 749L671 756M672 749L666 757" stroke="#666" stroke-width="0.9"/><circle cx="665" cy="759" r="2" fill="none" stroke="#2a90d8" stroke-width="1.3"/><circle cx="673" cy="759" r="2" fill="none" stroke="#2a90d8" stroke-width="1.3"/><rect x="137" y="766" width="28" height="2" fill="#99c4ec"/><rect x="248" y="766" width="20" height="2" fill="#99c4ec"/><rect x="285" y="766" width="20" height="2" fill="#99c4ec"/><rect x="433" y="766" width="19" height="2" fill="#99c4ec"/><rect x="470" y="766" width="19" height="2" fill="#99c4ec"/><rect x="507" y="766" width="29" height="2" fill="#99c4ec"/><rect x="544" y="766" width="20" height="2" fill="#99c4ec"/><rect x="581" y="766" width="28" height="2" fill="#99c4ec"/><rect x="614" y="766" width="32" height="2" fill="#99c4ec"/><rect x="655" y="766" width="29" height="2" fill="#99c4ec"/><rect x="268.5" y="766" width="7.5" height="2" fill="#6a92bb"/><rect x="305" y="766" width="8" height="2" fill="#6a92bb"/><rect x="452" y="766" width="9" height="2" fill="#6a92bb"/><rect x="489" y="766" width="9" height="2" fill="#6a92bb"/><rect x="564" y="766" width="8" height="2" fill="#6a92bb"/><rect x="646" y="766" width="4" height="2" fill="#6a92bb"/><line x1="783.5" y1="745" x2="783.5" y2="761" stroke="#5a7ca0"/><line x1="786.5" y1="745" x2="786.5" y2="761" stroke="#5a7ca0"/><path d="M848 758H861C862.5 758 862.5 753.5 860 753.5C859.5 750 855 749 853 751.5C850.5 750.5 848 752.5 848.5 754.5C846.5 755 846.5 758 848 758Z" fill="#3b9ae2"/><path d="M848 758H861C862.5 758 862.5 755 861 754.5C856 754 852 755.5 848 758Z" fill="#1c6fc0"/><path d="M865 746L867.5 748L865 750M868.5 746L871 748L868.5 750" stroke="#fff" stroke-width="1.3" fill="none"/><g fill="#58c020"><rect x="951" y="761" width="3" height="3"/><rect x="956" y="758" width="3" height="6"/><rect x="961" y="755" width="3" height="9"/><rect x="966" y="751" width="4" height="13"/></g><path d="M950 757C955 754 962 751 968 745" stroke="#58c020" stroke-width="2.4" fill="none"/><path d="M963 743.5L971.5 742.5L970 750.5Z" fill="#58c020"/><path d="M1092.5 756.5L1098 751L1103.5 756.5" stroke="#fff" stroke-width="1.3" fill="none"/><rect x="1118" y="745" width="7" height="11" rx="3.5" fill="#fff"/><path d="M1116 753A5.5 5.5 0 0 0 1127 753" stroke="#fff" stroke-width="1.2" fill="none"/><line x1="1121.5" y1="758.5" x2="1121.5" y2="761" stroke="#fff" stroke-width="1.2"/><line x1="1117.5" y1="761.5" x2="1125.5" y2="761.5" stroke="#fff" stroke-width="1.2"/><path d="M1138 750.5H1141L1145 747V760L1141 756.5H1138Z" fill="none" stroke="#fff" stroke-width="1.1"/><path d="M1147 750A5 5 0 0 1 1147 757M1149.5 748A8 8 0 0 1 1149.5 759M1152 746A11 11 0 0 1 1152 761" stroke="#fff" stroke-width="1.1" fill="none"/><path d="M1162 750H1165M1162 753H1165M1165 748V755" stroke="#fff" stroke-width="1.2"/><rect x="1166.5" y="749.5" width="10" height="7" fill="none" stroke="#fff" stroke-width="1.1"/><rect x="1168" y="751" width="7" height="4" fill="#fff"/><rect x="1177" y="751.5" width="1.3" height="3" fill="#fff"/><path d="M1189 759A11 11 0 0 1 1200 748M1192 759A8 8 0 0 1 1200 751M1195 759A5 5 0 0 1 1200 754" stroke="#fff" stroke-width="1.2" fill="none"/><circle cx="1199" cy="759" r="1.5" fill="#fff"/><path d="M1216 760C1213 758 1215 754 1218 756L1226 746C1228 744 1231 747 1229 749L1221 758C1223 759 1227 757 1230 753" stroke="#fff" stroke-width="1.2" fill="none"/><path d="M1325 745H1341V759H1336L1333 762L1330 759H1325Z" fill="#fff"/><path d="M1328 749H1338M1328 752H1338M1328 755H1334" stroke="#004276" stroke-width="1.1"/><line x1="1359.5" y1="738" x2="1359.5" y2="768" stroke="#4a6f98"/></svg>
<div class="a t" style="left:797.60px;top:747px;font-size:12px;line-height:14px;letter-spacing:-0.383px;color:#d8dee6;">Desktop</div>
<div class="a t" style="left:981.60px;top:745px;font-size:14px;line-height:16px;transform:scaleX(0.8585);transform-origin:0 0;color:#fff;">NIFTY</div>
<div class="a t" style="left:1027.10px;top:745px;font-size:14px;line-height:16px;transform:scaleX(0.9375);transform-origin:0 0;color:#3ad03a;">+0.57%</div>
<div class="a t" style="left:1244.30px;top:746px;font-size:12px;line-height:14px;transform:scaleX(0.8462);transform-origin:0 0;color:#fff;">ENG</div>
<div class="a t" style="left:1280.80px;top:746px;font-size:12px;line-height:14px;transform:scaleX(0.8862);transform-origin:0 0;color:#fff;">11:32</div>
</body></html>
